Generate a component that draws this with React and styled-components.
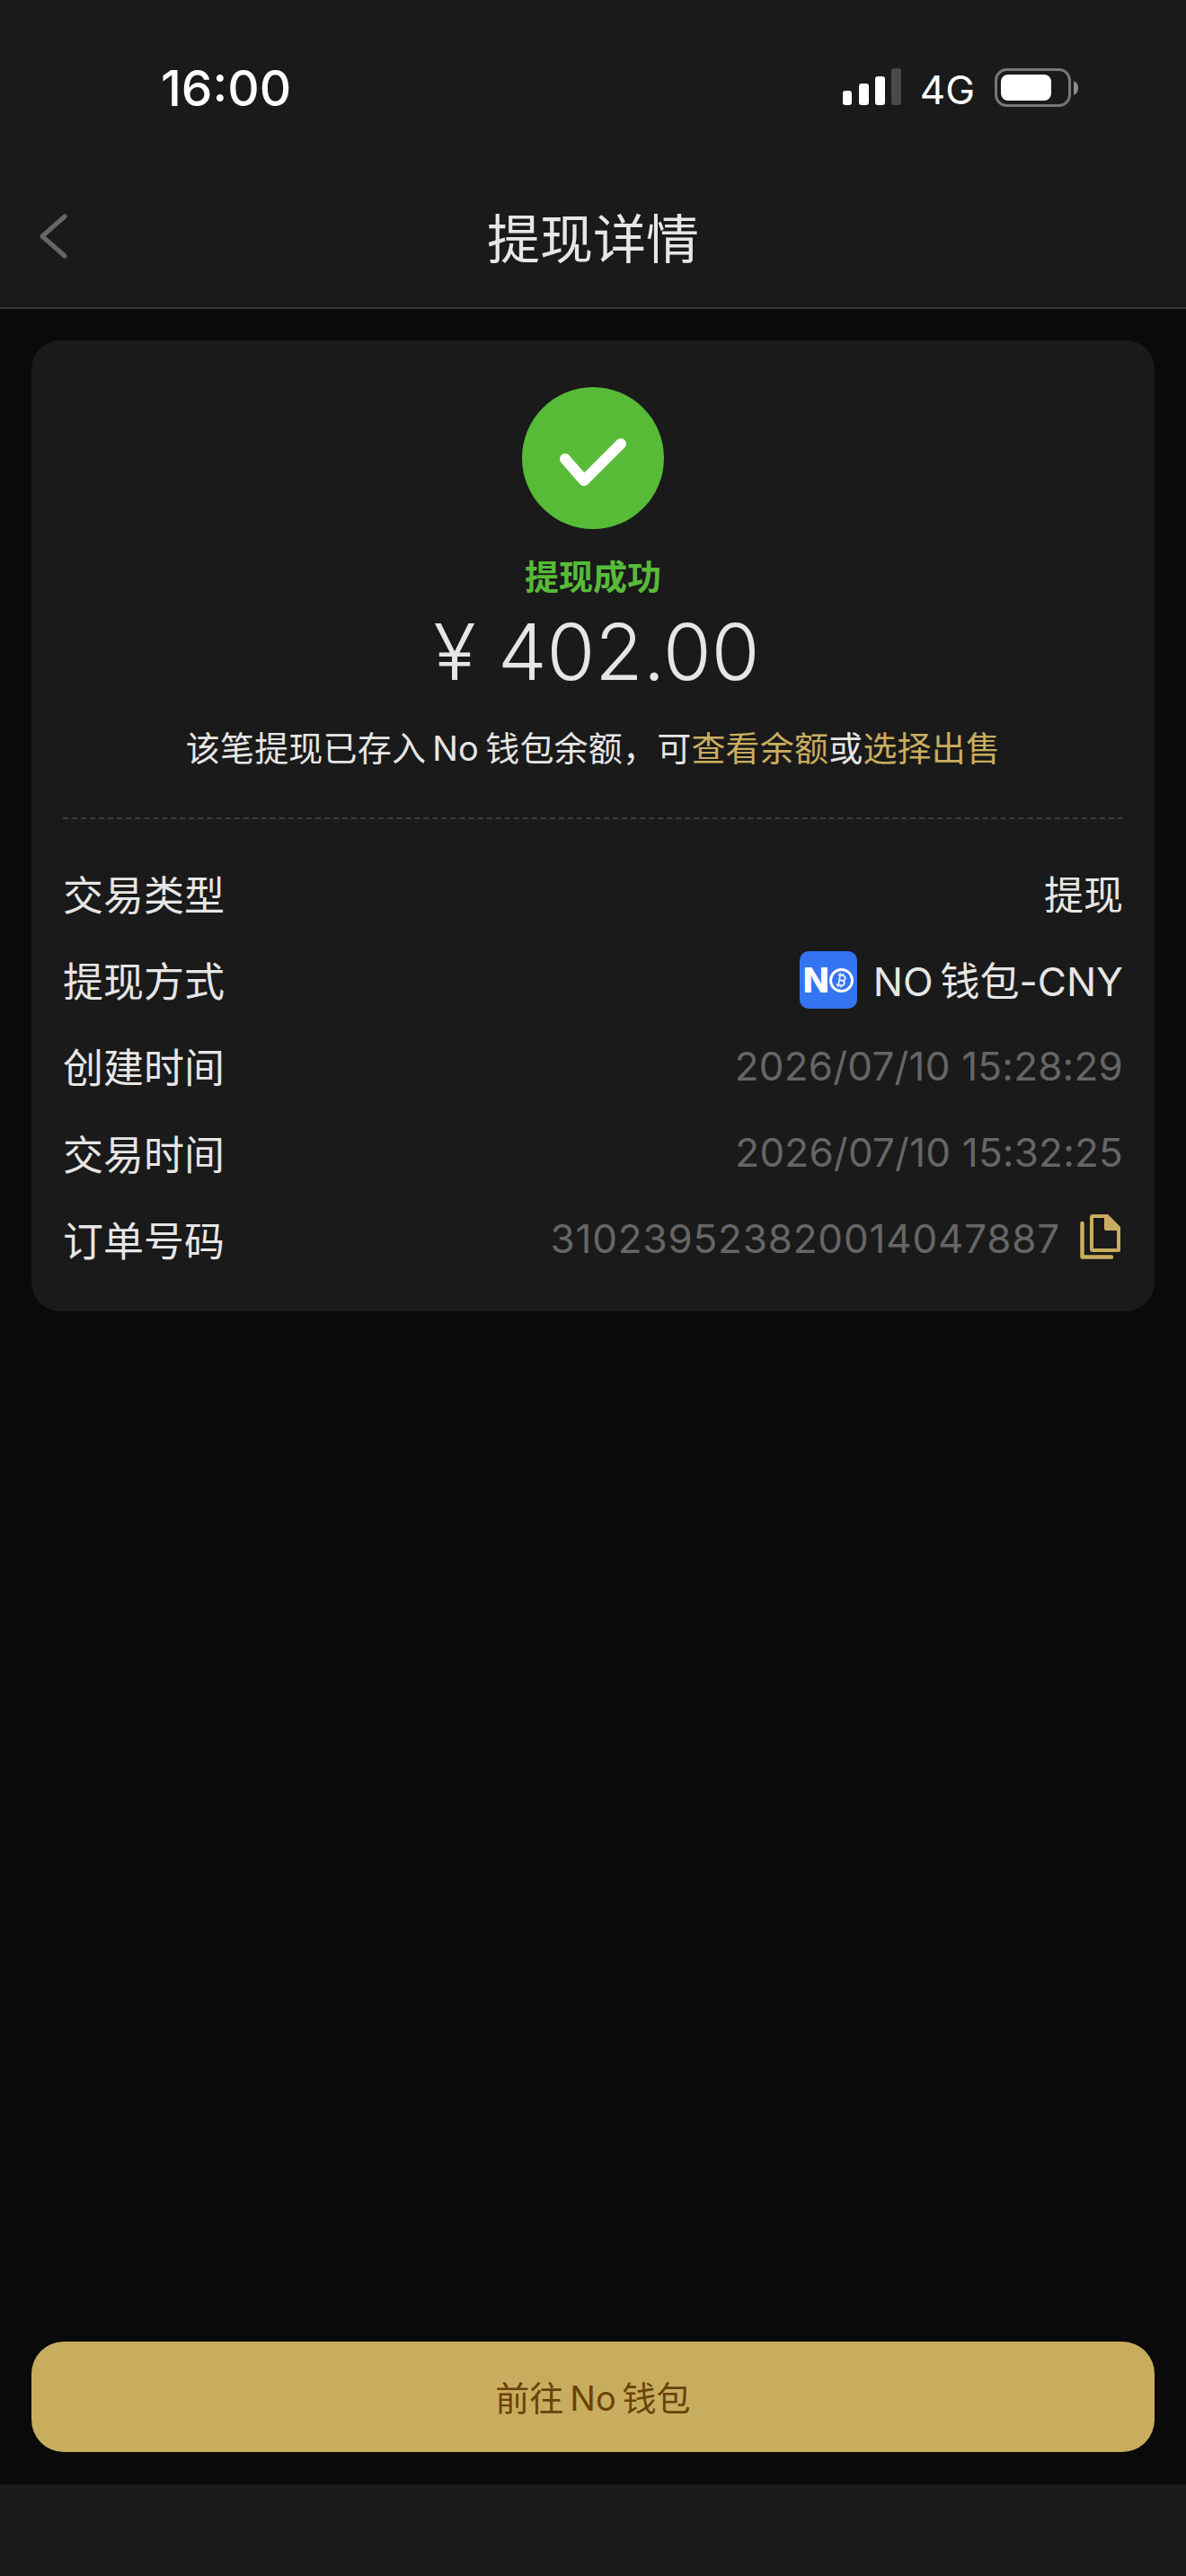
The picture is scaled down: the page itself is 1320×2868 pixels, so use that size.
import styled, { createGlobalStyle } from 'styled-components'
import { Bitcoin } from 'lucide-react'

const GlobalStyle = createGlobalStyle`
    html, body {
        margin: 0;
        padding: 0;
        background-color: #0a0a0a;
    }
    * {
        box-sizing: border-box;
    }
`

const Page = styled.div`
    width: 1320px;
    height: 2868px;
    display: flex;
    flex-direction: column;
    background-color: #0a0a0a;
    font-family: Inter, "Noto Sans CJK SC", sans-serif;
    color: #e6e6e6;
`

const TopBar = styled.header`
    height: 344px;
    flex: none;
    background-color: #1a1a1a;
    border-bottom: 2px solid #3a3a3a;
`

const StatusBar = styled.div`
    height: 198px;
    display: flex;
    justify-content: space-between;
    padding: 72px 120px 0 179px;
`

const Clock = styled.div`
    font-size: 55px;
    line-height: 52px;
    font-weight: 500;
    color: #fff;
`

const StatusIcons = styled.div`
    display: flex;
    align-items: flex-start;
    padding-top: 4px;
`

const Network = styled.span`
    font-size: 44px;
    line-height: 44px;
    margin: 2px 22px 0 21px;
    color: #fff;
`

const NavBar = styled.div`
    height: 144px;
    position: relative;
    display: flex;
    justify-content: center;
    align-items: center;
`

const BackIcon = styled.svg`
    position: absolute;
    left: 42px;
    top: 40px;
`

const Title = styled.h1`
    margin: 0 0 6px;
    font-size: 59px;
    line-height: 80px;
    font-weight: 400;
`

const Content = styled.main`
    flex: 1;
    display: flex;
    flex-direction: column;
    padding: 35px 35px 36px;
`

const Card = styled.section`
    height: 1081px;
    background-color: #1a1a1a;
    border-radius: 32px;
    padding: 52px 35px 0;
`

const Summary = styled.div`
    display: flex;
    flex-direction: column;
    align-items: center;
    height: 481px;
    border-bottom: 2px dashed #3c3c3c;
`

const SuccessBadge = styled.div`
    width: 158px;
    height: 158px;
    border-radius: 50%;
    background-color: #57bb38;
    display: flex;
    align-items: center;
    justify-content: center;
`

const CheckIcon = styled.svg`
    margin-top: 10px;
`

const SuccessText = styled.div`
    margin-top: 28px;
    font-size: 38px;
    line-height: 50px;
    font-weight: 700;
    color: #57bb38;
`

const Amount = styled.div`
    margin: 4px 0 0 8px;
    font-size: 87px;
    line-height: 110px;
    font-weight: 350;
    white-space: pre;
`

const Note = styled.p`
    margin: 24px 0 0;
    font-size: 38px;
    line-height: 56px;
    letter-spacing: 0.2px;
`

const Link = styled.span`
    color: #c9ad5f;
`

const Rows = styled.div`
    display: flex;
    flex-direction: column;
    padding-top: 34px;
`

const Row = styled.div`
    height: 96.3px;
    display: flex;
    justify-content: space-between;
    align-items: center;
    font-size: 45px;
`

const RowValue = styled.div`
    display: flex;
    align-items: center;
    gap: 18px;
    font-size: 44px;
    color: ${(props) => (props.$muted ? '#666666' : '#e6e6e6')};
    letter-spacing: ${(props) => (props.$muted ? '0.2px' : 'normal')};
`

const OrderNumber = styled.span`
    letter-spacing: 0.8px;
`

const WalletLogo = styled.div`
    width: 64px;
    height: 64px;
    margin-top: 2px;
    border-radius: 10px;
    background-color: #3574f0;
    display: flex;
    align-items: center;
    justify-content: center;
    color: #fff;
    font-size: 38px;
    font-weight: 800;
    letter-spacing: -1px;
`

const CoinRing = styled.span`
    width: 27px;
    height: 27px;
    margin-left: 1px;
    border-radius: 50%;
    border: 3px solid #fff;
    display: flex;
    align-items: center;
    justify-content: center;
    color: #dfe9ff;
`

const CopyButton = styled.span`
    display: flex;
    margin: -4px 2px 0 4px;
`

const ActionButton = styled.button`
    margin-top: auto;
    height: 123px;
    padding-bottom: 4px;
    border: none;
    border-radius: 36px;
    background-color: #c9ad5f;
    color: #6b4208;
    font-family: inherit;
    font-size: 38px;
`

const BottomBar = styled.footer`
    height: 102px;
    flex: none;
    background-color: #1a1a1a;
`

function SignalIcon() {
    return (
        <svg width="65" height="42" viewBox="0 0 65 42">
            <rect x="0" y="25" width="10" height="16" rx="3" fill="#fff" />
            <rect x="18" y="17" width="11" height="24" rx="3" fill="#fff" />
            <rect x="36" y="9" width="11" height="32" rx="3" fill="#fff" />
            <rect x="54" y="0" width="11" height="41" rx="3" fill="#4a4a4a" />
        </svg>
    )
}

function BatteryIcon() {
    return (
        <svg width="93" height="44" viewBox="0 0 93 44">
            <rect x="1.5" y="1.5" width="82" height="40" rx="12" fill="none" stroke="#777" strokeWidth="3" />
            <rect x="7" y="7" width="56" height="29" rx="8" fill="#fff" />
            <path d="M88 14l3 2q2 2 2 6t-2 6l-3 2z" fill="#8a8a8a" />
        </svg>
    )
}

function CopyIcon() {
    return (
        <svg width="46" height="52" viewBox="0 0 46 52">
            <path d="M14 1h17l14 14v26a2 2 0 0 1-2 2H14a3 3 0 0 1-3-3V4a3 3 0 0 1 3-3z" fill="#c9ad5f" />
            <path d="M15 5h12v12a2 2 0 0 0 2 2h12v20H15z" fill="#1a1a1a" />
            <path d="M2.500 11v37.500H35" fill="none" stroke="#c9ad5f" strokeWidth="4.500" strokeLinecap="round" strokeLinejoin="round" />
        </svg>
    )
}

function App() {
    return (
        <Page>
            <GlobalStyle />
            <TopBar>
                <StatusBar>
                    <Clock>16:00</Clock>
                    <StatusIcons>
                        <SignalIcon />
                        <Network>4G</Network>
                        <BatteryIcon />
                    </StatusIcons>
                </StatusBar>
                <NavBar>
                    <BackIcon width="34" height="50" viewBox="0 0 34 50">
                        <path d="M30 3L5 25l25 22" fill="none" stroke="#666" strokeWidth="5" strokeLinecap="round" strokeLinejoin="round" />
                    </BackIcon>
                    <Title>提现详情</Title>
                </NavBar>
            </TopBar>
            <Content>
                <Card>
                    <Summary>
                        <SuccessBadge>
                            <CheckIcon width="76" height="56" viewBox="0 0 76 56">
                                <path d="M7 24l21 24L69 7" fill="none" stroke="#fff" strokeWidth="12" strokeLinecap="round" strokeLinejoin="round" />
                            </CheckIcon>
                        </SuccessBadge>
                        <SuccessText>提现成功</SuccessText>
                        <Amount>¥ 402.00</Amount>
                        <Note>
                            该笔提现已存入{'\u2009'}No{'\u2009'}钱包余额，可<Link>查看余额</Link>或<Link>选择出售</Link>
                        </Note>
                    </Summary>
                    <Rows>
                        <Row>
                            <span>交易类型</span>
                            <RowValue>提现</RowValue>
                        </Row>
                        <Row>
                            <span>提现方式</span>
                            <RowValue>
                                <WalletLogo>
                                    N
                                    <CoinRing>
                                        <Bitcoin size={19} strokeWidth={2.5} />
                                    </CoinRing>
                                </WalletLogo>
                                <span>NO{'\u2009'}钱包-CNY</span>
                            </RowValue>
                        </Row>
                        <Row>
                            <span>创建时间</span>
                            <RowValue $muted>2026/07/10 15:28:29</RowValue>
                        </Row>
                        <Row>
                            <span>交易时间</span>
                            <RowValue $muted>2026/07/10 15:32:25</RowValue>
                        </Row>
                        <Row>
                            <span>订单号码</span>
                            <RowValue $muted>
                                <OrderNumber>310239523820014047887</OrderNumber>
                                <CopyButton>
                                    <CopyIcon />
                                </CopyButton>
                            </RowValue>
                        </Row>
                    </Rows>
                </Card>
                <ActionButton>前往{'\u2009'}No{'\u2009'}钱包</ActionButton>
            </Content>
            <BottomBar />
        </Page>
    )
}

export default App
